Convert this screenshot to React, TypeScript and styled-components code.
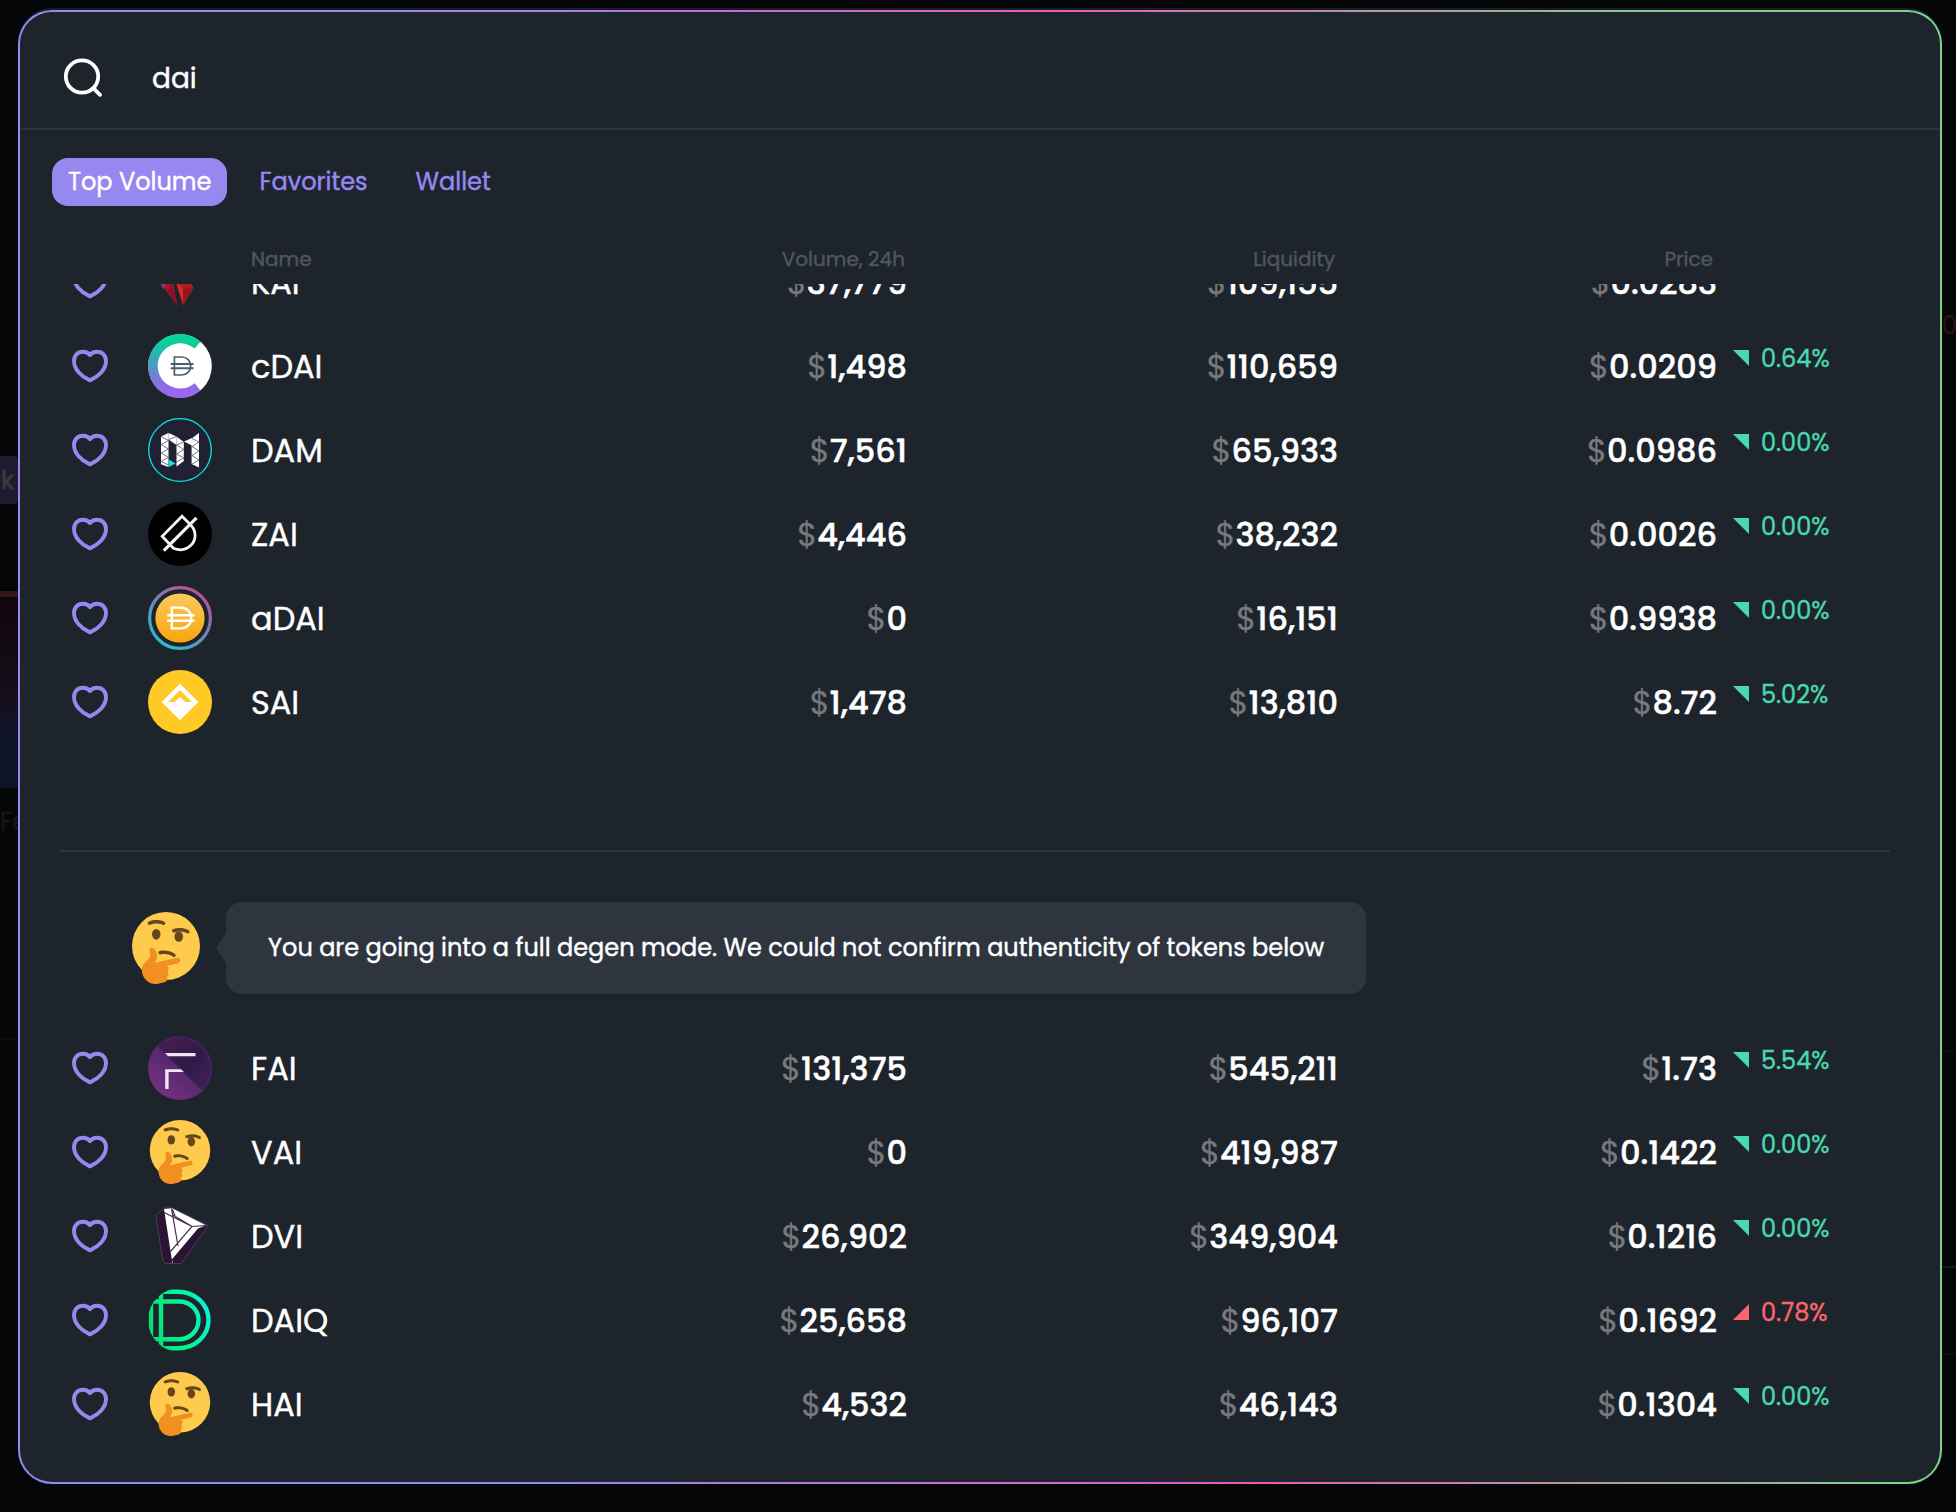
import React, { useId } from 'react';
import styled, { createGlobalStyle, css } from 'styled-components';

const color = {
  page: '#050608',
  panel: '#1e242c',
  line: '#2d3340',
  bubble: '#2f353f',
  accent: '#9788f0',
  muted: '#50565f',
  currency: '#77797d',
  up: '#48d9ae',
  down: '#ff646d',
};

const GlobalStyle = createGlobalStyle`
  *, *::before, *::after { box-sizing: border-box; }
  body {
    margin: 0;
    background: ${color.page};
    color: #fff;
    font-family: Poppins, Inter, "Liberation Sans", sans-serif;
    -webkit-text-stroke: 0.4px currentColor;
  }
`;

/* ---------- page frame ---------- */

const Page = styled.div`
  display: grid;
  grid-template-columns: 18px 1924px 14px;
  height: 1512px;
  overflow: hidden;
`;

const Edge = styled.div`
  display: flex;
  flex-direction: column;
  overflow: hidden;
`;

const DimButton = styled.div`
  display: flex;
  align-items: center;
  height: 48px;
  margin-top: 456px;
  padding-left: 1px;
  border-radius: 0 4px 4px 0;
  background: #1f1a2e;
  color: #3a3a3b;
  font-size: 24px;
  font-weight: 500;
`;

const DimChart = styled.div`
  height: 197px;
  margin-top: 87px;
  border-top: 6px solid #351618;
  background: linear-gradient(#10060b, #150e1a 50%, #10152a 75%, #0e1426);
`;

const DimText = styled.span<{ $top: number; $tone: string }>`
  margin-top: ${(p) => p.$top}px;
  color: ${(p) => p.$tone};
  font-size: 24px;
  line-height: 30px;
`;

const DimLine = styled.div<{ $top: number; $tone: string }>`
  height: 2px;
  flex: none;
  margin-top: ${(p) => p.$top}px;
  background: ${(p) => p.$tone};
`;

const Panel = styled.main`
  display: flex;
  flex-direction: column;
  height: 1474px;
  margin-top: 10px;
  overflow: hidden;
  border: 2px solid transparent;
  border-radius: 34px;
  background:
    linear-gradient(${color.panel}, ${color.panel}) padding-box,
    linear-gradient(82deg, #9886f1 26%, #ea5cb8 58.5%, #80d08a 88%) border-box;
  box-shadow: 0 -2px 0 #181d24;
`;

/* ---------- search ---------- */

const SearchBar = styled.header`
  display: flex;
  align-items: center;
  flex: none;
  gap: 50px;
  height: 118px;
  padding: 14px 0 0 42px;
  border-bottom: 2px solid ${color.line};
`;

const Query = styled.span`
  padding-top: 4px;
  font-size: 28px;
`;

/* ---------- tabs ---------- */

const Tabs = styled.nav`
  display: flex;
  flex: none;
  gap: 16px;
  padding: 28px 32px 0;
`;

const Tab = styled.button<{ $active?: boolean }>`
  height: 48px;
  padding: 0 16px;
  border: 0;
  border-radius: 16px;
  background: transparent;
  color: ${color.accent};
  font: inherit;
  font-size: 24px;
  line-height: 48px;
  ${(p) =>
    p.$active &&
    css`
      background: ${color.accent};
      color: #fff;
    `}
`;

/* ---------- table ---------- */

const columns = css`
  display: grid;
  grid-template-columns: 76px 103px 275.5px 380.5px 431px 379px 1fr;
  align-items: center;
  padding-left: 52px;
`;

const HeadRow = styled.div`
  ${columns}
  flex: none;
  height: 78px;
  padding-top: 27px;
  color: ${color.muted};
  font-size: 20px;
`;

const HeadCell = styled.span<{ $end?: number }>`
  ${(p) =>
    p.$end !== undefined &&
    css`
      padding-right: ${p.$end}px;
      text-align: right;
    `}
`;

const Viewport = styled.div`
  flex: 1;
  min-height: 0;
  overflow: hidden;
`;

const ScrolledContent = styled.div`
  margin-top: -44px;
`;

const Row = styled.div`
  ${columns}
  height: 84px;
`;

const Name = styled.span`
  padding-top: 1px;
  font-size: 32px;
`;

const Amount = styled.span`
  display: flex;
  justify-content: flex-end;
  padding-top: 1px;
  font-size: 32px;
  font-weight: 500;
  -webkit-text-stroke-width: 0.5px;
`;

const Currency = styled.span`
  color: ${color.currency};
  font-weight: 400;
  -webkit-text-stroke: 0.3px ${color.currency};
`;

const Change = styled.span<{ $down?: boolean }>`
  display: flex;
  align-items: center;
  gap: 12px;
  height: 84px;
  padding: 0 0 16px 16px;
  color: ${(p) => (p.$down ? color.down : color.up)};
  font-size: 24px;
`;

const Triangle = styled.i<{ $down?: boolean }>`
  width: 16px;
  height: 16px;
  background: currentColor;
  clip-path: ${(p) => (p.$down ? 'polygon(100% 0, 100% 100%, 0 100%)' : 'polygon(0 0, 100% 0, 100% 100%)')};
`;

const Divider = styled.hr`
  height: 2px;
  margin: 106px 50px 50px 40px;
  border: 0;
  background: ${color.line};
`;

/* ---------- warning ---------- */

const Warning = styled.div`
  display: flex;
  align-items: center;
  height: 92px;
  margin-bottom: 32px;
  padding-left: 110px;
`;

const BubbleTail = styled.i`
  width: 10px;
  height: 30px;
  margin-left: 14px;
  background: ${color.bubble};
  clip-path: polygon(100% 0, 0 50%, 100% 100%);
`;

const Bubble = styled.div`
  display: flex;
  align-items: center;
  width: 1140px;
  height: 92px;
  padding: 0 0 2px 42px;
  border-radius: 16px;
  background: ${color.bubble};
  font-size: 24px;
  white-space: nowrap;
`;

/* ---------- drawings ---------- */

const SearchIcon = () => (
  <svg width="40" height="40" viewBox="0 0 40 40" fill="none" stroke="#fff" strokeWidth="3.8" strokeLinecap="round">
    <circle cx="20" cy="19.5" r="16.2" />
    <path d="M31.6 31.4 38 37.8" />
  </svg>
);

const Heart = () => (
  <svg width="36" height="34" viewBox="0 0 36 34" fill="none" stroke={color.accent} strokeWidth="3.9" strokeLinejoin="round">
    <path d="M18 6.1C16.1 3.5 13.7 2.7 11 2.7 5.6 2.7 2 6.8 2 12.1 2 20.5 9.5 27.6 18 31.4 26.5 27.6 34 20.5 34 12.1 34 6.8 30.4 2.7 25 2.7 22.3 2.7 19.9 3.5 18 6.1Z" />
  </svg>
);

const Thinking = ({ size = 64 }: { size?: number }) => (
  <svg width={size} height={size} viewBox="0 0 36 36">
    <circle fill="#FFCB4C" cx="18" cy="17.018" r="17" />
    <path fill="#65471B" d="M14.524 21.036c-.145-.116-.258-.274-.312-.464-.134-.46.13-.918.59-1.021 4.528-1.021 7.577 1.363 7.706 1.465.384.306.459.845.173 1.205-.286.358-.828.401-1.211.097-.11-.084-2.523-1.923-6.182-1.098-.274.061-.554-.016-.764-.184z" />
    <ellipse fill="#65471B" cx="13.119" cy="11.174" rx="2.125" ry="2.656" />
    <ellipse fill="#65471B" cx="24.375" cy="12.236" rx="2.125" ry="2.656" />
    <path fill="#F19020" d="M17.276 35.149s1.265-.411 1.429-1.352c.173-.972-.624-1.167-.624-1.167s1.041-.208 1.172-1.376c.123-1.101-.861-1.363-.861-1.363s.97-.4 1.016-1.539c.038-.959-.995-1.428-.995-1.428s5.038-1.221 5.556-1.341c.516-.12 1.32-.615 1.069-1.694-.249-1.08-1.204-1.118-1.697-1.003-.494.115-6.744 1.566-8.9 2.068l-1.439.334c-.54.127-.785-.11-.404-.512.508-.536.833-1.129.946-2.113.119-1.035-.232-2.313-.433-2.809-.374-.921-1.005-1.649-1.734-1.899-1.137-.39-1.945.321-1.542 1.561.604 1.854.208 3.375-.833 4.293-2.449 2.157-3.588 3.695-2.83 6.973.828 3.575 4.377 5.876 7.952 5.048l3.152-.681z" />
    <path fill="#65471B" d="M9.296 6.351c-.164-.088-.303-.224-.391-.399-.216-.428-.04-.927.393-1.112 4.266-1.831 7.699-.043 7.843.034.433.231.608.747.391 1.154-.216.405-.74.546-1.173.318-.123-.063-2.832-1.432-6.278.047-.257.109-.547.085-.785-.042zm12.135 3.75c-.156-.098-.286-.243-.362-.424-.187-.442.023-.927.468-1.084 4.381-1.536 7.685.48 7.823.567.415.26.555.787.312 1.178-.242.39-.776.495-1.191.238-.12-.072-2.727-1.621-6.267-.379-.266.091-.553.046-.783-.096z" />
  </svg>
);

const KaiIcon = () => (
  <svg width="64" height="64" viewBox="0 0 64 64">
    <path fill="#a31530" d="M12 28h12l5.300 27.500-12-15.500z" />
    <path fill="#861124" d="M23.800 34 29.300 55.500 20 41z" />
    <path fill="#7c4079" d="M8 26h12.500L15.500 39.500z" />
    <path fill="#d92a2a" d="M26.500 28 45.700 37.500 35 55z" />
    <path fill="#b31d22" d="M28 29h11l6.700 8.500-11.500 1z" />
    <path fill="#971519" d="M35 38.500 45.700 37.500 35 55z" />
  </svg>
);

const CdaiIcon = () => {
  const id = useId();
  return (
    <svg width="64" height="64" viewBox="0 0 64 64" fill="none">
      <linearGradient id={id} x1="32" y1="4" x2="32" y2="60" gradientUnits="userSpaceOnUse">
        <stop offset="0" stopColor="#06d695" />
        <stop offset=".15" stopColor="#12c6a0" />
        <stop offset=".8" stopColor="#8770e0" />
        <stop offset="1" stopColor="#9a66ef" />
      </linearGradient>
      <circle cx="32" cy="32" r="31.8" fill="#fff" />
      <path fill={`url(#${id})`} d="M52.5 7.6A31.9 31.9 0 1 0 52.5 56.4L46.7 49.3A22.6 22.6 0 1 1 46.7 14.5Z" />
      <g stroke="#4a5f6e" strokeWidth="1.7">
        <path d="M26.4 23H33.5C39 23 42.7 27 42.7 32S39 41 33.5 41H26.4Z" />
        <path d="M22.7 30.1H45.5M22.7 34.2H45.5" strokeWidth="2" />
      </g>
    </svg>
  );
};

const DamIcon = () => (
  <svg width="64" height="64" viewBox="0 0 64 64">
    <circle cx="32" cy="32" r="31.3" fill="#202234" stroke="#08e5e6" strokeWidth="1.3" />
    <g fill="#fff">
      <path d="M13 18.5 20.5 15V49L13 46.2Z" />
      <path d="M20.5 15 28.5 18.5 28.5 27 20.5 21.5Z" />
      <path d="M28.5 18.5 35.8 24V43L28.5 48.5Z" />
      <path d="M43.6 20.5 51 15V49.5L43.6 46Z" />
      <path d="M36 23.5 44 20V27.5Z" />
    </g>
    <path fill="#0fe6e6" d="M20.8 41.5 27.5 45.5 20.8 49Z" />
    <path
      fill="none"
      stroke="#3a3c50"
      strokeWidth=".7"
      d="M13 18.5 20.5 22.5 13 26.5 20.5 31 13 35 20.5 39.5 13 43.5 20.5 47M28.5 18.5 20.5 21.5M28.5 27 35.8 24M28.5 27 35.8 31.5 28.5 36 35.8 40 28.5 44M44 20.5 51 24 44 28.5 51 33 44 37.5 51 42 44 46"
    />
  </svg>
);

const ZaiIcon = () => (
  <svg width="64" height="64" viewBox="0 0 64 64" fill="none" stroke="#f4f4f4" strokeWidth="2.8">
    <circle cx="32" cy="32" r="32" fill="#000" stroke="none" />
    <path d="M25.5 46.3 14.2 34.2 34 14.3 42.5 22.8C48.6 28.9 48.6 38 42.5 43.6 38 48 31.6 48.7 25.5 46.3Z" />
    <path d="M15.8 48.6 48.5 15.8" strokeWidth="3.2" />
  </svg>
);

const AdaiIcon = () => {
  const id = useId();
  return (
    <svg width="64" height="64" viewBox="0 0 64 64" fill="none">
      <linearGradient id={`${id}r`} x1="14" y1="58" x2="50" y2="6" gradientUnits="userSpaceOnUse">
        <stop offset="0" stopColor="#2bbdc8" />
        <stop offset="1" stopColor="#b6509e" />
      </linearGradient>
      <linearGradient id={`${id}f`} x1="32" y1="8" x2="32" y2="56" gradientUnits="userSpaceOnUse">
        <stop offset="0" stopColor="#fbc95c" />
        <stop offset="1" stopColor="#f8a60d" />
      </linearGradient>
      <circle cx="32" cy="32" r="30.4" stroke={`url(#${id}r)`} strokeWidth="3.2" />
      <circle cx="32" cy="32" r="24.6" fill={`url(#${id}f)`} />
      <g stroke="#fff" strokeWidth="2.4">
        <path d="M23.8 21.6H32.5C39 21.6 43.3 26 43.3 32S39 42.4 32.5 42.4H23.8Z" />
        <path d="M19.2 29.2H46.5M19.2 34.8H46.5" />
      </g>
    </svg>
  );
};

const SaiIcon = () => (
  <svg width="64" height="64" viewBox="0 0 64 64">
    <circle cx="32" cy="32" r="32" fill="#ffc926" />
    <path fill="#fff" d="M32 13.7 50.3 32 32 50.3 13.7 32Z" />
    <path fill="#ffc926" d="M32 20 44 32H37.5L32 26.7 26.5 32H20Z" />
  </svg>
);

const FaiIcon = () => {
  const id = useId();
  return (
    <svg width="64" height="64" viewBox="0 0 64 64">
      <linearGradient id={`${id}a`} x1="10" y1="60" x2="50" y2="10" gradientUnits="userSpaceOnUse">
        <stop offset="0" stopColor="#783184" />
        <stop offset="1" stopColor="#3c215a" />
      </linearGradient>
      <linearGradient id={`${id}b`} x1="12" y1="10" x2="60" y2="52" gradientUnits="userSpaceOnUse">
        <stop offset="0" stopColor="#451d50" />
        <stop offset=".55" stopColor="#2f1b47" />
        <stop offset="1" stopColor="#43205a" />
      </linearGradient>
      <circle cx="32" cy="32" r="32" fill={`url(#${id}a)`} />
      <path fill={`url(#${id}b)`} d="M9 9.7A32 32 0 0 1 54.3 54.7Z" />
      <path fill="#efe6f1" d="M17 17H47.5V20.2H20Z" />
      <path fill="#efe6f1" d="M17.2 33.2H33L36 36H20.6V53H17.2Z" />
    </svg>
  );
};

const DviIcon = () => (
  <svg width="64" height="64" viewBox="0 0 64 64">
    <path fill="#2a1333" stroke="#5d4a65" strokeWidth=".7" d="M8 11.5 16.5 4 24 4 60 21.5 35 57 33 59.5H17L14.5 56Z" />
    <path fill="#fff" d="M16 5 24 4.2 58 21.3 50 24.5 23.8 55.5Z" />
    <path
      fill="none"
      stroke="#44304b"
      strokeWidth="1.2"
      d="M16 8.5 44 22.5 58 21.5M23.5 4.5 30 42M24 10.5 44 22.5 22.5 47.5M24.5 5.5 27 12"
    />
    <path fill="none" stroke="#8d8392" strokeWidth="1" d="M24.5 56.5V59" />
  </svg>
);

const DaiqIcon = () => {
  const id = useId();
  return (
    <svg width="64" height="64" viewBox="0 0 64 64" fill="none">
      <linearGradient id={`${id}g`} x1="0" y1="40" x2="64" y2="24" gradientUnits="userSpaceOnUse">
        <stop offset="0" stopColor="#05df70" />
        <stop offset=".5" stopColor="#04f58e" />
        <stop offset="1" stopColor="#0bf0d8" />
      </linearGradient>
      <clipPath id={`${id}c`}>
        <circle cx="32" cy="32" r="32" />
      </clipPath>
      <g clipPath={`url(#${id}c)`} stroke={`url(#${id}g)`} strokeWidth="4.4">
        <path d="M13 3.7H30C47 3.7 60.5 16 60.5 32S47 60.3 30 60.3H13Z" />
        <path d="M3 13.5H31C42 13.5 50.5 21.5 50.5 32S42 51.3 31 51.3H3Z" />
      </g>
    </svg>
  );
};

/* ---------- data ---------- */

interface Token {
  name: string;
  icon: React.FC;
  volume: string;
  liquidity: string;
  price: string;
  change: string;
  down?: boolean;
}

const listed: Token[] = [
  { name: 'KAI', icon: KaiIcon, volume: '37,779', liquidity: '109,155', price: '0.0283', change: '0.00%' },
  { name: 'cDAI', icon: CdaiIcon, volume: '1,498', liquidity: '110,659', price: '0.0209', change: '0.64%' },
  { name: 'DAM', icon: DamIcon, volume: '7,561', liquidity: '65,933', price: '0.0986', change: '0.00%' },
  { name: 'ZAI', icon: ZaiIcon, volume: '4,446', liquidity: '38,232', price: '0.0026', change: '0.00%' },
  { name: 'aDAI', icon: AdaiIcon, volume: '0', liquidity: '16,151', price: '0.9938', change: '0.00%' },
  { name: 'SAI', icon: SaiIcon, volume: '1,478', liquidity: '13,810', price: '8.72', change: '5.02%' },
];

const unverified: Token[] = [
  { name: 'FAI', icon: FaiIcon, volume: '131,375', liquidity: '545,211', price: '1.73', change: '5.54%' },
  { name: 'VAI', icon: Thinking, volume: '0', liquidity: '419,987', price: '0.1422', change: '0.00%' },
  { name: 'DVI', icon: DviIcon, volume: '26,902', liquidity: '349,904', price: '0.1216', change: '0.00%' },
  { name: 'DAIQ', icon: DaiqIcon, volume: '25,658', liquidity: '96,107', price: '0.1692', change: '0.78%', down: true },
  { name: 'HAI', icon: Thinking, volume: '4,532', liquidity: '46,143', price: '0.1304', change: '0.00%' },
];

const MoneyCell = ({ value }: { value: string }) => (
  <Amount>
    <Currency>$</Currency>
    {value}
  </Amount>
);

const TokenRow = ({ token }: { token: Token }) => {
  const Icon = token.icon;
  return (
    <Row>
      <Heart />
      <Icon />
      <Name>{token.name}</Name>
      <MoneyCell value={token.volume} />
      <MoneyCell value={token.liquidity} />
      <MoneyCell value={token.price} />
      <Change $down={token.down}>
        <Triangle $down={token.down} />
        {token.change}
      </Change>
    </Row>
  );
};

export default function App() {
  return (
    <>
      <GlobalStyle />
      <Page>
        <Edge>
          <DimButton>k</DimButton>
          <DimChart />
          <DimText $top={19} $tone="#161718">Fe</DimText>
          <DimLine $top={201} $tone="#0a0c0e" />
        </Edge>
        <Panel>
          <SearchBar>
            <SearchIcon />
            <Query>dai</Query>
          </SearchBar>
          <Tabs>
            <Tab $active>Top Volume</Tab>
            <Tab>Favorites</Tab>
            <Tab>Wallet</Tab>
          </Tabs>
          <HeadRow>
            <span />
            <span />
            <HeadCell>Name</HeadCell>
            <HeadCell $end={2}>Volume, 24h</HeadCell>
            <HeadCell $end={3}>Liquidity</HeadCell>
            <HeadCell $end={4}>Price</HeadCell>
          </HeadRow>
          <Viewport>
            <ScrolledContent>
              {listed.map((token) => (
                <TokenRow key={token.name} token={token} />
              ))}
              <Divider />
              <Warning>
                <Thinking size={72} />
                <BubbleTail />
                <Bubble>You are going into a full degen mode. We could not confirm authenticity of tokens below</Bubble>
              </Warning>
              {unverified.map((token) => (
                <TokenRow key={token.name} token={token} />
              ))}
            </ScrolledContent>
          </Viewport>
        </Panel>
        <Edge>
          <DimText $top={311} $tone="#2f0f10">00</DimText>
          <DimLine $top={709} $tone="#0a0c0e" />
          <DimLine $top={214} $tone="#06211d" />
          <DimLine $top={85} $tone="#0c0e10" />
        </Edge>
      </Page>
    </>
  );
}
